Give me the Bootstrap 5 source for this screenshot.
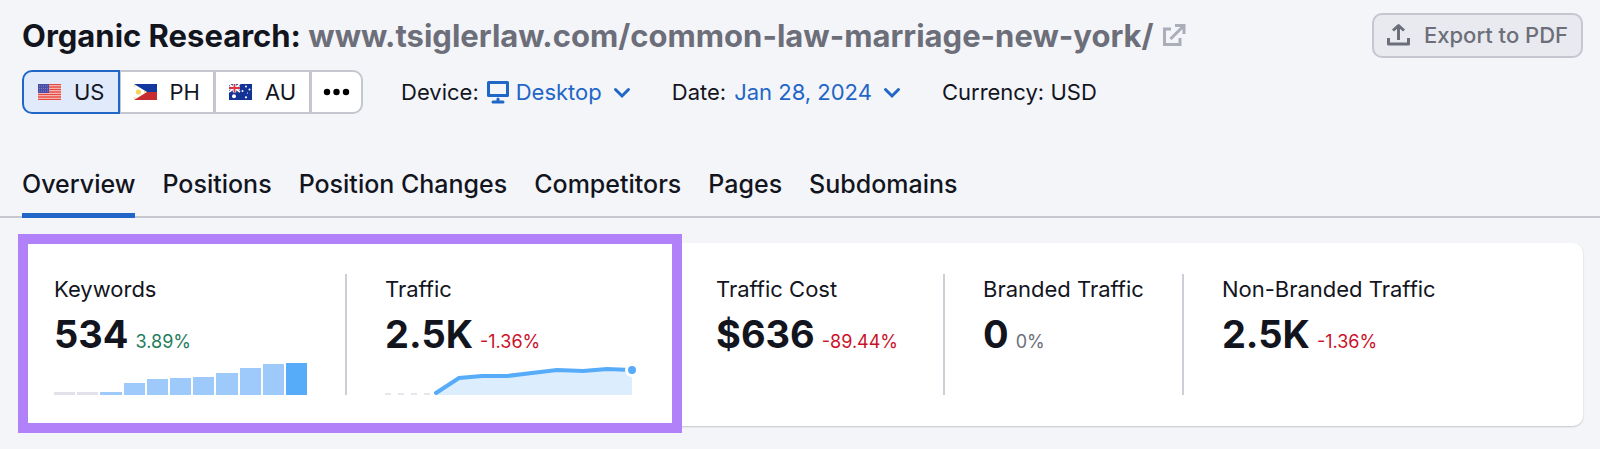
<!DOCTYPE html>
<html lang="en">
<head>
<meta charset="utf-8">
<meta name="viewport" content="width=device-width, initial-scale=1">
<title>Organic Research</title>
<link href="https://cdn.jsdelivr.net/npm/bootstrap@5.3.0/dist/css/bootstrap.min.css" rel="stylesheet">
<style>
  :root { --ink: #13151e; --muted: #6c6e79; --line: #c4c7cf; --blue: #1f66c7; --accent: #57acf9; }
  body { font-family: Inter, "Liberation Sans", sans-serif; background: #f4f5f9; color: var(--ink); font-size: 22px; line-height: 28px; }
  .page-head { padding: 13px 17px 0 22px; }
  .page-title { font-size: 31px; line-height: 44px; font-weight: 700; }
  .page-title a { color: var(--muted); }
  .page-title svg { margin-left: 8px; vertical-align: baseline; }
  .btn-export { height: 45px; padding: 0 13px 2px; border: 2px solid var(--line); border-radius: 10px; background: #e9eaef; color: var(--muted); font-size: 22px; font-weight: 500; line-height: 28px; gap: 14px; }
  .filters { margin-top: 12px; gap: 38px; }
  .filters a { color: var(--blue); }
  .filters .chevron { margin-left: 8px; }
  .filters .device-icon { margin: 0 6px 0 -1px; }
  .db-group .btn { height: 44px; padding: 0 13px; border: 2px solid var(--line); background: #fff; color: var(--ink); font-size: 22px; line-height: 28px; border-radius: 10px; gap: 13px; }
  .db-group .btn.active { padding-left: 14px; background: #e0eafa; border-color: var(--blue); color: var(--ink); }
  .db-group .btn + .btn { margin-left: -2px; }
  .db-group .btn.more { padding: 0 11px; }
  .section-tabs { margin-top: 44px; padding: 0 22px; gap: 27px; border-bottom: 2px solid #c7c9d0; }
  .section-tabs .nav-link { padding: 12px 0 15px; margin-bottom: -2px; border-bottom: 5px solid transparent; color: var(--ink); font-size: 25px; line-height: 28px; font-weight: 500; }
  .section-tabs .nav-link.active { border-color: var(--blue); }
  .metrics { margin: 25px 17px 22px 22px; padding: 31px 0; border-radius: 10px; background: #fff; box-shadow: 0 1px 2px #00000030; }
  .metric { padding: 0 38px; border-right: 2px solid #cdced7; }
  .highlight .metric:first-child { padding-left: 32px; }
  .metrics > .metric:last-child, .highlight .metric:last-child { border-color: transparent; }
  .metric.cost { min-width: 267px; }
  .metric h2 { margin: 0 0 6px; font-size: 22px; line-height: 30px; font-weight: 400; }
  .figure-row { gap: 7px; }
  .figure-row strong { font-size: 38px; line-height: 48px; font-weight: 700; }
  .figure-row span { font-size: 18px; line-height: 24px; }
  .up { color: #1d7d5c; } .down { color: #cb1129; } .flat { color: var(--muted); }
  .spark { width: 253px; height: 37px; gap: 2px; }
  .spark i { flex: 1; background: #9dcafa; }
  .spark i.none { background: #e0e1e9; }
  .spark i.last { background: var(--accent); }
  .highlight::after { content: ""; position: absolute; inset: -40px -4px -38px -4px; border: 10px solid #b181f9; pointer-events: none; }
</style>
</head>
<body>
<header class="page-head">
  <div class="d-flex justify-content-between align-items-center">
    <h1 class="page-title m-0">Organic Research: <a class="text-decoration-none" href="#">www.tsiglerlaw.com/common-law-marriage-new-york/<svg width="24" height="24" viewBox="0 0 24 24" fill="none" stroke="#abadb8" stroke-width="3" aria-label="Open page"><path d="M9 6H2.500V21.500H18V15M13 2.500H22V11M21.500 3L8.500 16"/></svg></a></h1>
    <button class="btn btn-export d-flex align-items-center" type="button">
      <svg width="23" height="23" viewBox="0 0 23 23" fill="none" stroke="currentColor" stroke-width="3" stroke-linejoin="round" aria-hidden="true"><path d="M1.500 15V21H21.500V15M11.500 17V3M6 7.500L11.500 2.500L17 7.500"/></svg>Export to PDF</button>
  </div>
  <div class="filters d-flex align-items-center">
    <div class="btn-group db-group" role="group" aria-label="Database">
      <button class="btn active d-flex align-items-center" type="button">
        <svg width="23" height="16" viewBox="0 0 23 16" aria-hidden="true"><path fill="#f7d9d8" d="M0 0h23v16H0z"/><path stroke="#e8483f" stroke-width="1.300" d="M0 .6h23M0 3h23M0 5.500h23M0 8h23M0 10.500h23M0 13h23M0 15.400h23"/><path fill="#4a4da8" d="M0 0h11v9H0z"/><path stroke="#7d80c4" stroke-dasharray="1 1" d="M1 2h9M1 4.500h9M1 7h9"/></svg>US</button>
      <button class="btn d-flex align-items-center" type="button">
        <svg width="23" height="16" viewBox="0 0 23 16" aria-hidden="true"><path fill="#1238a0" d="M0 0h23v8H0z"/><path fill="#c52b30" d="M0 8h23v8H0z"/><path fill="#fff" d="M0 0L13 8L0 16z"/><circle cx="4.500" cy="8" r="2.600" fill="#f8d254"/><path fill="#f8d254" d="M0 1l2 1-2 1zM0 13l2 1-2 1zM10 7l2 1-2 1z"/></svg>PH</button>
      <button class="btn d-flex align-items-center" type="button">
        <svg width="23" height="16" viewBox="0 0 23 16" aria-hidden="true"><path fill="#123296" d="M0 0h23v16H0z"/><path stroke="#fff" stroke-width="1.600" d="M0 0L11 8M11 0L0 8"/><path stroke="#fff" stroke-width="3.400" d="M5.500 0v8.500M0 4h11"/><path stroke="#dc3444" stroke-width="1.800" d="M5.500 0v8.500M0 4h11"/><circle cx="5" cy="12.300" r="2" fill="#fff"/><g fill="#fff"><circle cx="17" cy="2.500" r="1"/><circle cx="13.500" cy="7" r="1"/><circle cx="20.500" cy="5.500" r="1"/><circle cx="18.500" cy="9" r=".6"/><circle cx="17" cy="13.300" r="1.100"/></g></svg>AU</button>
      <button class="btn more d-flex align-items-center" type="button" aria-label="More databases">
        <svg width="27" height="8" viewBox="0 0 27 8" fill="#000" aria-hidden="true"><circle cx="4" cy="4" r="3.200"/><circle cx="13.500" cy="4" r="3.200"/><circle cx="23" cy="4" r="3.200"/></svg></button>
    </div>
    <div class="d-flex align-items-center">Device:
      <a class="d-flex align-items-center text-decoration-none ms-2" href="#"><svg class="device-icon" width="24" height="24" viewBox="0 0 24 24" fill="none" stroke="currentColor" stroke-width="3" stroke-linejoin="round" aria-hidden="true"><path d="M2.500 2.500H21.500V15.500H2.500z"/><path d="M12 19V22M7 22H17" stroke-linecap="round"/></svg>Desktop
      <svg class="chevron" width="24" height="24" viewBox="0 0 24 24" fill="none" stroke="currentColor" stroke-width="3" stroke-linecap="round" aria-hidden="true"><path d="M5.500 9.500L12 16L18.500 9.500"/></svg></a></div>
    <div class="d-flex align-items-center">Date:
      <a class="d-flex align-items-center text-decoration-none ms-2" href="#">Jan 28, 2024
      <svg class="chevron" width="24" height="24" viewBox="0 0 24 24" fill="none" stroke="currentColor" stroke-width="3" stroke-linecap="round" aria-hidden="true"><path d="M5.500 9.500L12 16L18.500 9.500"/></svg></a></div>
    <div>Currency: USD</div>
  </div>
</header>
<nav class="section-tabs nav">
  <a class="nav-link active" aria-current="page" href="#">Overview</a>
  <a class="nav-link" href="#">Positions</a>
  <a class="nav-link" href="#">Position Changes</a>
  <a class="nav-link" href="#">Competitors</a>
  <a class="nav-link" href="#">Pages</a>
  <a class="nav-link" href="#">Subdomains</a>
</nav>
<main class="metrics d-flex">
  <div class="highlight d-flex position-relative">
    <section class="metric">
      <h2>Keywords</h2>
      <div class="figure-row d-flex align-items-baseline"><strong>534</strong><span class="up">3.89%</span></div>
      <div class="spark d-flex align-items-end" role="img" aria-label="Keywords trend">
        <i class="none" style="height:3px"></i><i class="none" style="height:3px"></i><i style="height:3px"></i><i style="height:12px"></i><i style="height:16px"></i><i style="height:17px"></i><i style="height:18px"></i><i style="height:22px"></i><i style="height:27px"></i><i style="height:31px"></i><i class="last" style="height:32px"></i>
      </div>
    </section>
    <section class="metric">
      <h2>Traffic</h2>
      <div class="figure-row d-flex align-items-baseline"><strong>2.5K</strong><span class="down">-1.36%</span></div>
      <svg class="spark d-block" viewBox="0 0 253 37" fill="none" role="img" aria-label="Traffic trend">
        <path fill="#dceefe" d="M51 37L74 20L97 18H122L147 15L172 12L198 13L222 11H247V37z"/>
        <path stroke="#e6e7ed" stroke-width="2" stroke-dasharray="6 7" d="M0 36H46"/>
        <path stroke="#57acf9" stroke-width="4" stroke-linecap="round" d="M51 35L74 20L97 18H122L147 15L172 12L198 13L222 11L247 12"/>
        <circle cx="247" cy="12" r="5.500" fill="#57acf9" stroke="#fff" stroke-width="3"/>
      </svg>
    </section>
  </div>
  <section class="metric cost">
    <h2>Traffic Cost</h2>
    <div class="figure-row d-flex align-items-baseline"><strong>$636</strong><span class="down">-89.44%</span></div>
  </section>
  <section class="metric">
    <h2>Branded Traffic</h2>
    <div class="figure-row d-flex align-items-baseline"><strong>0</strong><span class="flat">0%</span></div>
  </section>
  <section class="metric">
    <h2>Non-Branded Traffic</h2>
    <div class="figure-row d-flex align-items-baseline"><strong>2.5K</strong><span class="down">-1.36%</span></div>
  </section>
</main>
<script src="https://cdn.jsdelivr.net/npm/bootstrap@5.3.0/dist/js/bootstrap.bundle.min.js"></script>
</body>
</html>
